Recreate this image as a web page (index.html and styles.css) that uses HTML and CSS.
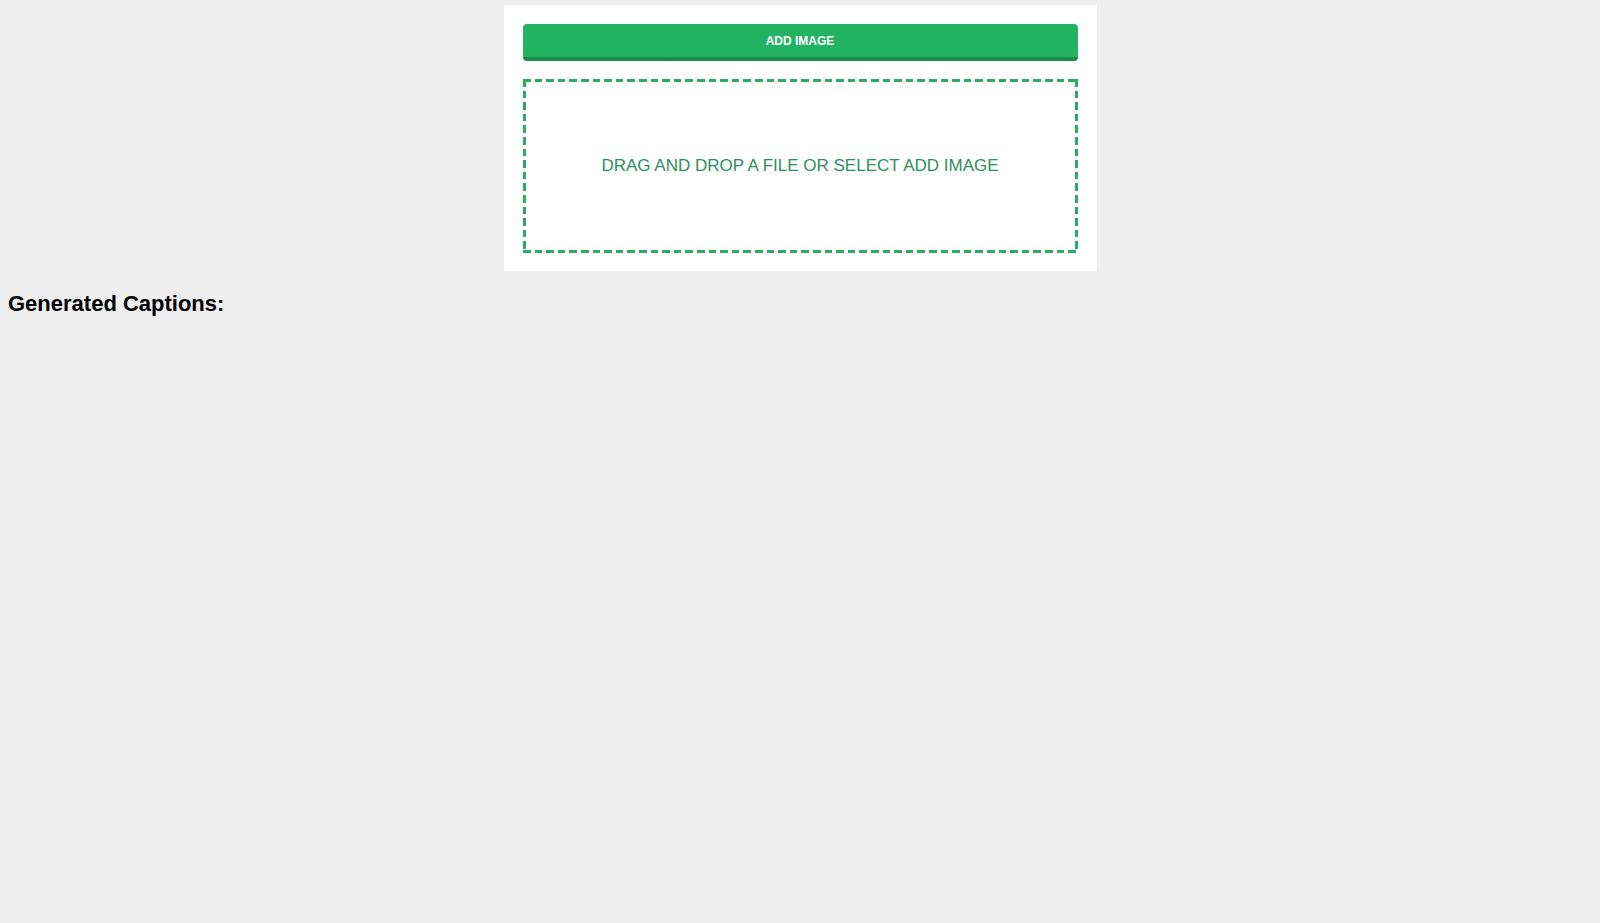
FILE: index.html
```html
<!DOCTYPE html>
<html>
<head>
<meta charset="utf-8">
<link rel="stylesheet" href="styles.css">
</head>
<body>
<div class="card">
  <button class="add-btn">ADD IMAGE</button>
  <div class="dropzone">DRAG AND DROP A FILE OR SELECT ADD IMAGE</div>
</div>
<h2 class="captions-title">Generated Captions:</h2>
</body>
</html>
```

FILE: styles.css
```css
html, body {
  background: #eeeeee;
}
body {
  margin: 0;
  padding: 5px 8px 8px 8px;
  font-family: "Liberation Sans", Arial, sans-serif;
}
.card {
  width: 555px;
  margin: 0 auto;
  background: #ffffff;
  padding: 19px 19px 18px 19px;
  display: flex;
  flex-direction: column;
  gap: 18px;
}
.add-btn {
  display: block;
  width: 100%;
  height: 37px;
  border: none;
  border-bottom: 4px solid #1a8b4c;
  border-radius: 4px;
  background: #22b363;
  color: #ffffff;
  font-family: "Liberation Sans", Arial, sans-serif;
  font-weight: bold;
  font-size: 12px;
  padding: 0;
}
.dropzone {
  height: 174px;
  box-sizing: border-box;
  background:
    repeating-linear-gradient(90deg, #27ae60 0 7.5px, transparent 7.5px 11.6px) left top / 100% 3px no-repeat,
    repeating-linear-gradient(90deg, #27ae60 0 7.5px, transparent 7.5px 11.6px) left bottom / 100% 3px no-repeat,
    repeating-linear-gradient(180deg, #27ae60 0 7.5px, transparent 7.5px 11.6px) left top / 3px 100% no-repeat,
    repeating-linear-gradient(180deg, #27ae60 0 7.5px, transparent 7.5px 11.6px) right top / 3px 100% no-repeat,
    #ffffff;
  display: flex;
  align-items: center;
  justify-content: center;
  color: #2b9158;
  font-size: 17px;
}
.captions-title {
  font-size: 22px;
  font-weight: bold;
  margin: 20px 0 0 0;
  color: #000;
}
```
